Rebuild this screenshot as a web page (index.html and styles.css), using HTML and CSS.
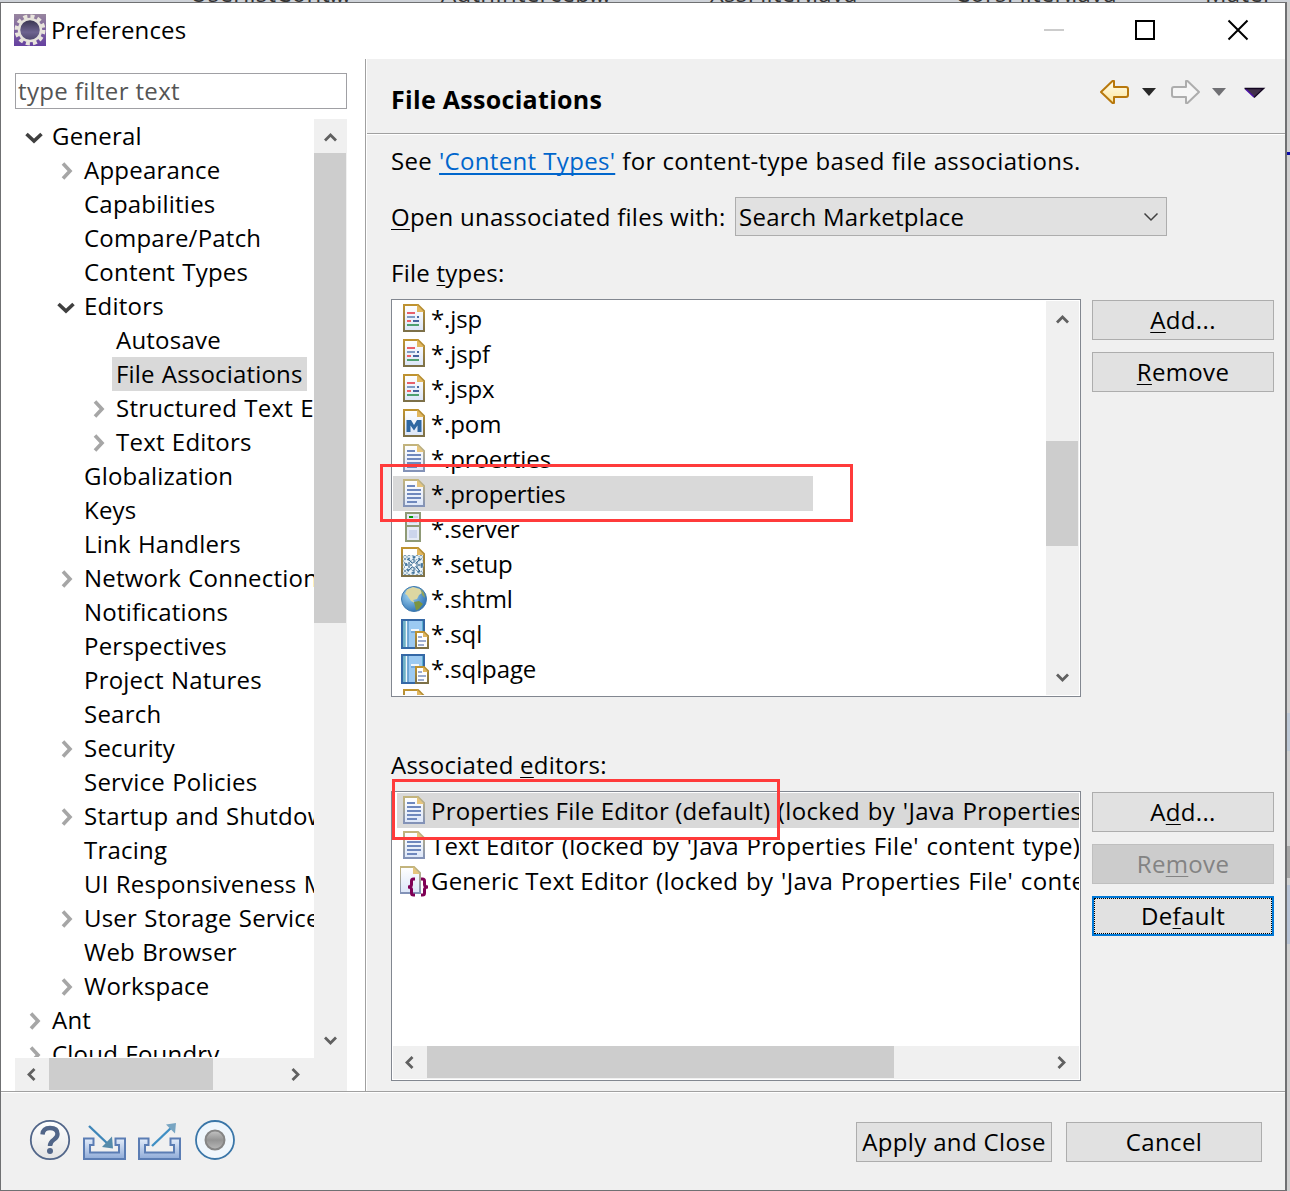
FILE: index.html
```html
<!DOCTYPE html>
<html lang="en">
<head>
<meta charset="utf-8">
<title>Preferences</title>
<link rel="stylesheet" href="styles.css">
</head>
<body>
<svg class="defs" width="0" height="0">
  <defs>
    <linearGradient id="gold" x1="0" y1="0" x2="0" y2="1"><stop offset="0" stop-color="#bf9330"/><stop offset="1" stop-color="#7c7048"/></linearGradient>
    <linearGradient id="pale" x1="0" y1="0" x2="0" y2="1"><stop offset="0" stop-color="#c3b47c"/><stop offset="1" stop-color="#8292b8"/></linearGradient>
    <linearGradient id="paper" x1="0" y1="0" x2="0" y2="1"><stop offset="0" stop-color="#ffffff"/><stop offset="1" stop-color="#dce6f8"/></linearGradient>
    <linearGradient id="tray" x1="0" y1="0" x2="0" y2="1"><stop offset="0" stop-color="#e4edfa"/><stop offset="1" stop-color="#8fabd8"/></linearGradient>
    <linearGradient id="arrow" x1="0" y1="0" x2="0" y2="1"><stop offset="0" stop-color="#fffdf0"/><stop offset="1" stop-color="#fde69a"/></linearGradient>
    <linearGradient id="knob" x1="0" y1="0" x2="0" y2="1"><stop offset="0" stop-color="#c4c4c4"/><stop offset=".5" stop-color="#949494"/><stop offset="1" stop-color="#b8b8b8"/></linearGradient>
    <radialGradient id="sea" cx=".35" cy=".35" r=".7"><stop offset="0" stop-color="#a5d8f4"/><stop offset="1" stop-color="#2f72b4"/></radialGradient>
    <linearGradient id="app" x1="0" y1="0" x2="0" y2="1"><stop offset="0" stop-color="#98869f"/><stop offset="1" stop-color="#6540a0"/></linearGradient>
    <linearGradient id="lens" x1="0" y1="0" x2="0" y2="1"><stop offset="0" stop-color="#35324a"/><stop offset=".6" stop-color="#6e6490"/><stop offset="1" stop-color="#4c4468"/></linearGradient>
    <linearGradient id="helpbg" x1="0" y1="0" x2="0" y2="1"><stop offset="0" stop-color="#fff"/><stop offset="1" stop-color="#e4e4e4"/></linearGradient>
    <pattern id="check" width="4" height="4" patternUnits="userSpaceOnUse"><rect width="4" height="4" fill="#dfe9ef"/><rect width="2" height="2" fill="#7f9fb8"/><rect x="2" y="2" width="2" height="2" fill="#a9c3d2"/></pattern>

    <symbol id="i-jsp" viewBox="0 0 30 35">
      <path d="M4 4H18L24 10V30H4Z" fill="url(#paper)" stroke="url(#gold)" stroke-width="2"/>
      <path d="M17 4L24 11H17Z" fill="#e2b75f"/>
      <path d="M7 12h8" stroke="#e8606a" stroke-width="2"/>
      <path d="M7 16h8" stroke="#7f9cc4" stroke-width="2"/><path d="M17 16h2" stroke="#4a6ba4" stroke-width="2"/>
      <path d="M7 20h4" stroke="#f0606a" stroke-width="2"/><path d="M13 20h6" stroke="#46639c" stroke-width="2"/>
      <path d="M7 24h12" stroke="#4fa070" stroke-width="2"/>
    </symbol>
    <symbol id="i-pom" viewBox="0 0 30 35">
      <path d="M4 4H18L24 10V30H4Z" fill="url(#paper)" stroke="url(#gold)" stroke-width="2"/>
      <path d="M17 4L24 11H17Z" fill="#e2b75f"/>
      <path d="M6.500 14H11L14 19L17 14H21.500V26H17.500V19.500L14 24.500L10.500 19.500V26H6.500Z" fill="#2f68a2"/>
    </symbol>
    <symbol id="i-text" viewBox="0 0 30 35">
      <path d="M4 4H18L24 10V30H4Z" fill="url(#paper)" stroke="url(#pale)" stroke-width="2"/>
      <path d="M17 4L24 11H17Z" fill="#e6c57c"/>
      <path d="M7 10h8M7 14h14M7 18h14M7 22h14M7 26h10" stroke="#6f88bd" stroke-width="2"/>
    </symbol>
    <symbol id="i-server" viewBox="0 0 30 35">
      <rect x="6" y="2" width="14" height="28" fill="#e6ebf6" stroke="#8f9a76" stroke-width="2"/>
      <path d="M6 15h14" stroke="#8f9a76" stroke-width="2"/>
      <rect x="9" y="5" width="4" height="2" fill="#0a9a0a"/><path d="M13 6h5M9 11h8" stroke="#c8d2e4" stroke-width="2"/>
      <rect x="9" y="19" width="8" height="8" fill="#ccd5ec"/>
    </symbol>
    <symbol id="i-setup" viewBox="0 0 30 35">
      <path d="M2 2H18L24 8V30H2Z" fill="#fff" stroke="url(#gold)" stroke-width="2"/>
      <path d="M17 2L24 9H17Z" fill="#e2b75f"/>
      <rect x="3" y="9" width="20" height="20" fill="url(#check)"/>
      <circle cx="14" cy="19" r="8" fill="none" stroke="#eef6fa" stroke-width="3"/>
      <circle cx="14" cy="19" r="8" fill="none" stroke="#4b7ca3" stroke-width="2" stroke-dasharray="3 3"/>
      <path d="M8 13l12 12M20 13L8 25M14 11v16M6 19h16" stroke="#3f6f98" stroke-width="1"/>
      <circle cx="14" cy="19" r="2" fill="#fff"/>
    </symbol>
    <symbol id="i-globe" viewBox="0 0 30 35">
      <circle cx="14" cy="18" r="12.500" fill="url(#sea)" stroke="#3d79ae"/>
      <path d="M7 8.500L13 6L20 8L22 12L19 14L17 18L13 19L15 22L11 20L7 14L5 13Z" fill="#ddd7a2"/>
      <path d="M14 21L19 20L23 23L19 28L16 29.500L15 25Z" fill="#7c9440"/>
      <path d="M21 8l3 4 1 5-3-3z" fill="#90a35c"/>
    </symbol>
    <symbol id="i-sql" viewBox="0 0 30 35">
      <rect x="2" y="4" width="22" height="28" fill="#9ccaf2" stroke="#3568a6" stroke-width="2"/>
      <path d="M3 5h3v26h-3z" fill="#6fb2c8"/><path d="M6.500 5v26" stroke="#f2f8fc" stroke-width="1.500"/><path d="M8 5v26" stroke="#3d7eb4"/>
      <path d="M22.500 5v12" stroke="#5ab0d0"/><path d="M11 14h8" stroke="#f2f7fc" stroke-width="2"/><path d="M11 16h6" stroke="#4d86c0"/>
      <path d="M16 16H24L28 20V32H16Z" fill="#fff" stroke="url(#gold)" stroke-width="2"/>
      <path d="M23 16L28 21H23Z" fill="#e2b75f"/><path d="M18 21h4M18 25h8M18 29h6" stroke="#7d93c0" stroke-width="1.700"/>
    </symbol>
    <symbol id="i-generic" viewBox="0 0 30 35">
      <path d="M0 4H14L20 10V30H0Z" fill="url(#paper)" stroke="url(#pale)" stroke-width="2"/>
      <path d="M13 4L20 11H13Z" fill="#e6c57c"/>
      <path d="M15 16H13.500Q11.500 16 11.500 18V21.500Q11.500 24 8 24Q11.500 24 11.500 26.500V30Q11.500 32 13.500 32H15M21 16H22.500Q24.500 16 24.500 18V21.500Q24.500 24 28 24Q24.500 24 24.500 26.500V30Q24.500 32 22.500 32H21" fill="none" stroke="#7f0055" stroke-width="3"/>
    </symbol>
    <symbol id="c-up" viewBox="0 0 34 34"><path d="M11 21.500L16.500 16L22 21.500" fill="none" stroke="#606060" stroke-width="2.800"/></symbol>
    <symbol id="c-down" viewBox="0 0 34 34"><path d="M11 13.500L16.500 19L22 13.500" fill="none" stroke="#606060" stroke-width="2.800"/></symbol>
    <symbol id="c-left" viewBox="0 0 34 34"><path d="M19.500 11L14 16.500L19.500 22" fill="none" stroke="#606060" stroke-width="2.800"/></symbol>
    <symbol id="c-right" viewBox="0 0 34 34"><path d="M13.500 11L19 16.500L13.500 22" fill="none" stroke="#606060" stroke-width="2.800"/></symbol>
    <symbol id="t-open" viewBox="0 0 32 34"><path d="M6.500 15L14 22L21.500 15" fill="none" stroke="#404040" stroke-width="3.600"/></symbol>
    <symbol id="t-closed" viewBox="0 0 32 34"><path d="M11 10.500L18 18L11 25.500" fill="none" stroke="#a6a6a6" stroke-width="3.600"/></symbol>
  </defs>
</svg>

<div class="backdrop-tabs"><span>UserlistCont...</span><span>AuthIntercep...</span><span>XssFilter.java</span><span>CorsFilter.java</span><span>Mater</span></div>
<div class="stage">
<div class="window">
  <header class="titlebar">
    <svg class="appicon" width="32" height="32" viewBox="0 0 32 32">
      <rect width="32" height="32" fill="url(#app)"/>
      <circle cx="16" cy="16" r="13.500" fill="none" stroke="#e8e4dc" stroke-width="4" stroke-dasharray="4 3.070"/>
      <circle cx="16" cy="16" r="11" fill="url(#lens)" stroke="#e6e3dc" stroke-width="2.500"/>
    </svg>
    <span class="wintitle">Preferences</span>
    <svg class="winbtns" width="210" height="30" viewBox="0 0 210 30">
      <path d="M4 15h20" stroke="#ccc" stroke-width="2"/>
      <rect x="96" y="6" width="18" height="18" fill="none" stroke="#000" stroke-width="2"/>
      <path d="M188.500 5.500l19 19M207.500 5.500l-19 19" stroke="#000" stroke-width="2"/>
    </svg>
  </header>

  <main class="main">
    <aside class="side">
      <div class="filter">type filter text</div>
      <div class="treebox">
        <div class="treerow">
          <ul class="tree">
            <li><svg><use href="#t-open"/></svg><span>General</span></li>
            <li class="l2"><svg><use href="#t-closed"/></svg><span>Appearance</span></li>
            <li class="l2"><svg></svg><span>Capabilities</span></li>
            <li class="l2"><svg></svg><span>Compare/Patch</span></li>
            <li class="l2"><svg></svg><span>Content Types</span></li>
            <li class="l2"><svg><use href="#t-open"/></svg><span>Editors</span></li>
            <li class="l3"><svg></svg><span>Autosave</span></li>
            <li class="l3"><svg></svg><span class="selected">File Associations</span></li>
            <li class="l3"><svg><use href="#t-closed"/></svg><span>Structured Text E</span></li>
            <li class="l3"><svg><use href="#t-closed"/></svg><span>Text Editors</span></li>
            <li class="l2"><svg></svg><span>Globalization</span></li>
            <li class="l2"><svg></svg><span>Keys</span></li>
            <li class="l2"><svg></svg><span>Link Handlers</span></li>
            <li class="l2"><svg><use href="#t-closed"/></svg><span>Network Connection</span></li>
            <li class="l2"><svg></svg><span>Notifications</span></li>
            <li class="l2"><svg></svg><span>Perspectives</span></li>
            <li class="l2"><svg></svg><span>Project Natures</span></li>
            <li class="l2"><svg></svg><span>Search</span></li>
            <li class="l2"><svg><use href="#t-closed"/></svg><span>Security</span></li>
            <li class="l2"><svg></svg><span>Service Policies</span></li>
            <li class="l2"><svg><use href="#t-closed"/></svg><span>Startup and Shutdow</span></li>
            <li class="l2"><svg></svg><span>Tracing</span></li>
            <li class="l2"><svg></svg><span>UI Responsiveness M</span></li>
            <li class="l2"><svg><use href="#t-closed"/></svg><span>User Storage Service</span></li>
            <li class="l2"><svg></svg><span>Web Browser</span></li>
            <li class="l2"><svg><use href="#t-closed"/></svg><span>Workspace</span></li>
            <li><svg><use href="#t-closed"/></svg><span>Ant</span></li>
            <li><svg><use href="#t-closed"/></svg><span>Cloud Foundry</span></li>
          </ul>
          <div class="vbar"><svg class="sb"><use href="#c-up"/></svg><div class="thumb tall"></div><svg class="sb end"><use href="#c-down"/></svg></div>
        </div>
        <div class="hbar side-h"><svg class="sb"><use href="#c-left"/></svg><div class="thumb"></div><svg class="sb end"><use href="#c-right"/></svg></div>
      </div>
    </aside>

    <section class="page">
      <div class="pagehead">
        <h1>File Associations</h1>
        <svg class="nav" width="170" height="30" viewBox="0 0 170 30">
          <path d="M1 15L12.500 4H14V10H26Q28 10 28 12V18Q28 20 26 20H14V26H12.500Z" fill="url(#arrow)" stroke="#b8780c" stroke-width="2" stroke-linejoin="round"/>
          <path d="M42 11h14l-7 8z" fill="#282828"/>
          <path d="M99 15L87.500 4H86V10H74Q72 10 72 12V18Q72 20 74 20H86V26H87.500Z" fill="#f6f6f6" stroke="#adadad" stroke-width="2" stroke-linejoin="round"/>
          <path d="M112 11h14l-7 8z" fill="#707074"/>
          <path d="M145.500 12h17l-8.500 8z" fill="#41304a"/><path d="M154 20l-8.500-8" stroke="#4b0fa8" stroke-width="1.500"/><path d="M144.500 11.500h19L154 20.500" fill="none" stroke="#120520" stroke-width="1.500"/>
        </svg>
      </div>
      <div class="pagebody">
        <p class="see">See <a>'Content Types'</a> for content-type based file associations.</p>
        <div class="openrow"><label><u>O</u>pen unassociated files with:</label><div class="combo"><span>Search Marketplace</span><svg width="16" height="12" viewBox="0 0 16 12"><path d="M1.500 2.500L8 9L14.500 2.500" fill="none" stroke="#404040" stroke-width="1.500"/></svg></div></div>
        <p class="ftlabel">File <u>t</u>ypes:</p>
        <div class="group types">
          <div class="list">
            <div class="rows">
              <div class="row"><svg><use href="#i-jsp"/></svg><span>*.jsp</span></div>
              <div class="row"><svg><use href="#i-jsp"/></svg><span>*.jspf</span></div>
              <div class="row"><svg><use href="#i-jsp"/></svg><span>*.jspx</span></div>
              <div class="row"><svg><use href="#i-pom"/></svg><span>*.pom</span></div>
              <div class="row"><svg><use href="#i-text"/></svg><span>*.proerties</span></div>
              <div class="row sel"><svg><use href="#i-text"/></svg><span>*.properties</span></div>
              <div class="row"><svg><use href="#i-server"/></svg><span>*.server</span></div>
              <div class="row"><svg><use href="#i-setup"/></svg><span>*.setup</span></div>
              <div class="row"><svg><use href="#i-globe"/></svg><span>*.shtml</span></div>
              <div class="row"><svg><use href="#i-sql"/></svg><span>*.sql</span></div>
              <div class="row"><svg><use href="#i-sql"/></svg><span>*.sqlpage</span></div>
              <div class="row"><svg><use href="#i-jsp"/></svg><span>*.</span></div>
            </div>
            <div class="vbar"><svg class="sb"><use href="#c-up"/></svg><div class="thumb mid"></div><svg class="sb end"><use href="#c-down"/></svg></div>
          </div>
          <div class="btns"><button><u>A</u>dd...</button><button><u>R</u>emove</button></div>
        </div>
        <p class="aslabel">Associated <u>e</u>ditors:</p>
        <div class="group editors">
          <div class="list col">
            <div class="rows">
              <div class="row sel"><svg><use href="#i-text"/></svg><span>Properties File Editor (default)<span class="lock"> (locked by 'Java Properties</span></span></div>
              <div class="row"><svg><use href="#i-text"/></svg><span>Text Editor<span class="lock"> (locked by 'Java Properties File' content type)</span></span></div>
              <div class="row"><svg><use href="#i-generic"/></svg><span>Generic Text Editor<span class="lock"> (locked by 'Java Properties File' conte</span></span></div>
            </div>
            <div class="hbar"><svg class="sb"><use href="#c-left"/></svg><div class="thumb"></div><svg class="sb end"><use href="#c-right"/></svg></div>
          </div>
          <div class="btns"><button>A<u>d</u>d...</button><button class="off">Re<u>m</u>ove</button><button class="focus">De<u>f</u>ault</button></div>
        </div>
      </div>
    </section>
  </main>

  <footer class="foot">
    <svg width="210" height="44" viewBox="0 0 210 44">
      <circle cx="21" cy="22" r="19.200" fill="url(#helpbg)" stroke="#526689" stroke-width="1.800"/>
      <path d="M13.500 16.500Q14 10 21 10Q28.500 10 28.500 16Q28.500 19 25 21.500Q21 24 21 28" fill="none" stroke="#526689" stroke-width="4.400"/>
      <circle cx="21" cy="33" r="3" fill="#526689"/>
      <path d="M55 20.500H64.500V27H61V34.500H90V27H86.500V20.500H96V41H55Z" fill="url(#tray)" stroke="#5b7db4" stroke-width="2"/>
      <path d="M60 8L80 27" stroke="#3f86b8" stroke-width="2.400"/><path d="M84 30.500L73 29L83 18.500Z" fill="#558bab"/>
      <path d="M110 20.500H119.500V27H116V34.500H145V27H141.500V20.500H151V41H110Z" fill="url(#tray)" stroke="#5b7db4" stroke-width="2"/>
      <path d="M123 28L143 9" stroke="#3f8fc4" stroke-width="2.400"/><path d="M147 5L137 6.500L146 15.500Z" fill="#78a5c2"/>
      <circle cx="186" cy="22" r="19" fill="#eff6fc" stroke="#3a76a8" stroke-width="1.800"/>
      <circle cx="186" cy="22" r="9.500" fill="url(#knob)" stroke="#858585" stroke-width="2"/>
    </svg>
    <div class="actions"><button>Apply and Close</button><button>Cancel</button></div>
  </footer>
  <div class="mark mark-type"></div>
  <div class="mark mark-editor"></div>
</div>
<div class="backdrop-edge"></div>
</div>
</body>
</html>
```
FILE: styles.css
```css
* { box-sizing: border-box; }
body {
  margin: 0; width: 1290px; height: 1191px; overflow: hidden;
  font: 24px/34px "Open Sans", "Noto Sans", sans-serif; color: #000; background: #d0d0d0;
  letter-spacing: .25px;
}
p, h1, ul { margin: 0; padding: 0; }
u { text-decoration-thickness: 1px; text-underline-offset: 3px; text-decoration-skip-ink: none; }
svg { display: block; flex: none; }
.defs { position: absolute; }
.backdrop-tabs {
  height: 2px; overflow: hidden; display: grid; align-items: end; white-space: nowrap;
  grid-template: 2px / 251px 269px 245px 250px 85px; padding-left: 190px; background: #ced2d8;
}
.backdrop-tabs span { height: 26px; line-height: 34px; color: #333; }
.stage { display: flex; height: 1189px; }
.window {
  position: relative; width: 1287px; display: flex; flex-direction: column;
  border: 1px solid #6f7072; border-right-width: 2px; background: #f0f0f0;
}
.backdrop-edge {
  width: 3px;
  background: linear-gradient(#d0d0d0 0 150px, #0a0aa8 150px 153px, #d0d0d0 153px 711px, #bdc8d6 711px 749px, #d0d0d0 749px 844px, #a6a6a6 844px 876px, #d0d0d0 876px 883px, #b7c2d4 883px 942px, #d0d0d0 942px);
}
.titlebar { height: 56px; background: #fff; display: flex; align-items: center; padding: 0 35px 2px 13px; }
.wintitle { margin-left: 5px; letter-spacing: .15px; }
.winbtns { margin-left: auto; }
.main { height: 1032px; display: flex; }
.side { width: 364px; background: #fff; padding: 14px 0 0 14px; }
.filter { width: 332px; height: 36px; border: 1px solid #a0a0a4; color: #555; padding-left: 2px; line-height: 33px; letter-spacing: .35px; }
.treebox { margin-top: 10px; width: 332px; height: 972px; }
.treerow { display: flex; height: 939px; }
.tree { width: 299px; height: 938px; overflow: hidden; list-style: none; white-space: nowrap; padding-left: 5px; }
.tree li { display: flex; height: 34px; }
.tree svg { width: 32px; height: 34px; margin-right: -4px; }
.tree span { padding: 0 4px; line-height: 34px; letter-spacing: .22px; word-spacing: .7px; }
.l2 { padding-left: 32px; }
.l3 { padding-left: 64px; }
.tree .selected { letter-spacing: .18px; }
.selected, .sel { background: #d9d9d9; }
.vbar { width: 33px; background: #f0f0f0; display: flex; flex-direction: column; }
.hbar { height: 33px; background: #f0f0f0; display: flex; }
.sb { width: 34px; height: 34px; }
.end { margin: auto 0 0; }
.hbar .end { margin: 0 0 0 auto; }
.thumb { background: #cdcdcd; }
.vbar .thumb { width: 32px; }
.hbar .thumb { height: 32px; width: 467px; }
.tall { height: 470px; }
.mid { height: 105px; margin-top: 106px; }
.side-h { padding-right: 34px; }
.side-h .thumb { width: 164px; }
.page { flex: 1; border-left: 1px solid #a0a0a0; box-shadow: inset 1px 0 #fff; }
.pagehead { height: 76px; margin-left: 1px; padding: 4px 15px 0 24px; display: flex; align-items: center; justify-content: space-between; border-bottom: 1px solid #fff; box-shadow: inset 0 -1px #a0a0a0; }
.pagehead h1 { font-size: 25px; line-height: 34px; font-weight: 700; letter-spacing: .3px; }
.nav { margin: -14px 0 0; }
.pagebody { padding: 9px 11px 0 25px; }
.see { height: 34px; letter-spacing: .3px; word-spacing: .5px; }
.see a { color: #0066cc; text-decoration: underline; text-decoration-thickness: 2px; text-underline-offset: 3px; text-decoration-skip-ink: none; }
.openrow { margin-top: 19px; height: 39px; display: flex; align-items: center; }
.openrow label { width: 344px; white-space: nowrap; }
.combo { width: 432px; height: 39px; border: 1px solid #adadad; background: #e1e1e1; display: flex; align-items: center; justify-content: space-between; padding: 0 7px 0 3px; }
.ftlabel { margin-top: 20px; height: 34px; }
.group { display: flex; gap: 11px; }
.types { margin-top: 9px; height: 398px; }
.list { width: 690px; border: 1px solid #828790; background: #fff; padding: 1px; display: flex; overflow: hidden; }
.col { flex-direction: column; }
.rows { flex: 1; min-width: 0; overflow: hidden; }
.row { height: 35px; display: flex; white-space: nowrap; line-height: 35px; overflow: hidden; padding-left: 7px; }
.row svg { width: 30px; height: 35px; overflow: visible; margin-right: 1px; }
.types .row { letter-spacing: -.12px; }
.types .sel { width: 420px; }
.editors .row { margin-left: 4px; padding-left: 3px; letter-spacing: .2px; }
.editors .lock { letter-spacing: .36px; word-spacing: 1px; }
.btns { display: flex; flex-direction: column; gap: 12px; padding-top: 1px; }
button { width: 182px; height: 40px; padding: 0; border: 1px solid #adadad; background: #e1e1e1; font: inherit; color: #000; letter-spacing: .35px; }
.off { background: #ccc; border-color: #bfbfbf; color: #838383; }
.focus { border: 2px solid #0078d7; outline: 1px dotted #000; outline-offset: -3px; }
.aslabel { margin-top: 51px; height: 34px; }
.editors { margin-top: 9px; height: 290px; }
.foot { flex: 1; border-top: 1px solid #a0a0a0; box-shadow: inset 0 1px #fff; display: flex; justify-content: space-between; align-items: flex-start; padding: 26px 23px 0 28px; }
.actions { display: flex; gap: 14px; padding-top: 4px; }
.actions button { width: 196px; }
.mark { position: absolute; border: 3px solid #ff3b3b; }
.mark-type { left: 379px; top: 461px; width: 473px; height: 58px; }
.mark-editor { left: 391px; top: 776px; width: 388px; height: 61px; }
```
